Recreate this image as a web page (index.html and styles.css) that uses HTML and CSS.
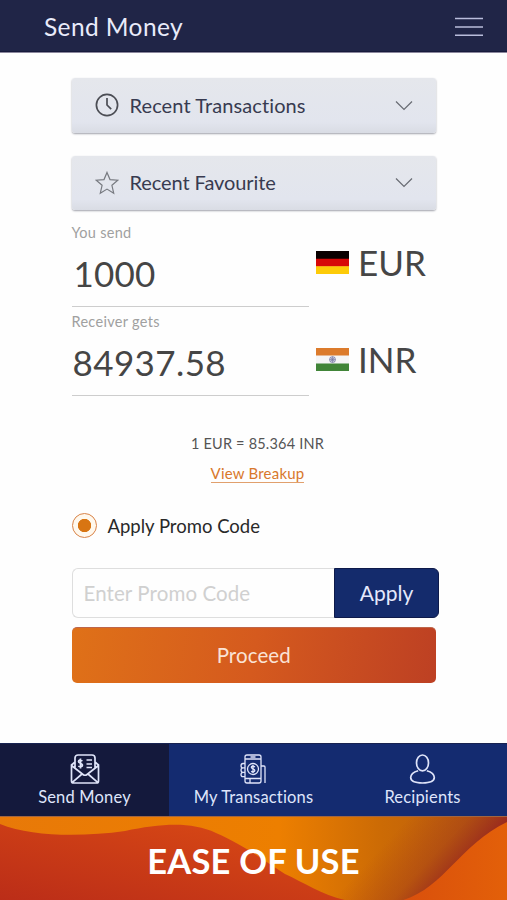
FILE: index.html
```html
<!DOCTYPE html>
<html lang="en">
<head>
<meta charset="utf-8">
<title>Send Money</title>
<link rel="stylesheet" href="styles.css">
</head>
<body>
<header class="topbar">
  <h1 class="title">Send Money</h1>
  <svg class="menu" width="28" height="20" viewBox="0 0 28 20"><path d="M0 1.5h28M0 10h28M0 18.2h28"/></svg>
</header>
<main class="content">
  <section class="card">
    <svg class="clock" width="24" height="24" viewBox="0 0 24 24"><circle cx="12" cy="12" r="10.6"/><path d="M12 5v7l4.2 4.2"/></svg>
    <span class="card-label transactions">Recent Transactions</span>
    <svg class="chevron" width="18" height="11" viewBox="0 0 18 11"><path d="M1 1.5l8 8 8-8"/></svg>
  </section>
  <section class="card">
    <svg class="star" width="24" height="24" viewBox="0 0 24 24"><path d="M12 1.4l3 7.2 7.8.6-5.9 5.1 1.8 7.9-6.7-4.1-6.7 4.1 1.8-7.9-5.9-5.1 7.8-.6z"/></svg>
    <span class="card-label favourite">Recent Favourite</span>
    <svg class="chevron" width="18" height="11" viewBox="0 0 18 11"><path d="M1 1.5l8 8 8-8"/></svg>
  </section>
  <section class="exchange">
    <div class="field">
      <div class="amount-box">
        <label class="field-label">You send</label>
        <div class="amount send-amount">1000</div>
      </div>
      <div class="currency">
        <svg width="33" height="23" viewBox="0 0 33 23"><path fill="#090000" d="M0 0h33v8H0z"/><path fill="#d70808" d="M0 7.7h33v8H0z"/><path fill="#fdcb08" d="M0 15.3h33V23H0z"/></svg>
        <span class="code">EUR</span>
      </div>
    </div>
    <div class="field">
      <div class="amount-box">
        <label class="field-label">Receiver gets</label>
        <div class="amount get-amount">84937.58</div>
      </div>
      <div class="currency get-currency">
        <svg width="33" height="23" viewBox="0 0 33 23"><path fill="#f5f5f6" d="M0 0h33v23H0z"/><path fill="#dc7b2c" d="M0 0h33v7.5H0z"/><path fill="#418538" d="M0 15.5h33V23H0z"/><circle cx="16.5" cy="11.6" r="3" fill="#d4d5e5" stroke="#8587ad" stroke-width=".8"/><path stroke="#7779a4" stroke-width=".7" d="M16.5 8.6v6M13.5 11.6h6M14.4 9.5l4.2 4.2M18.6 9.5l-4.2 4.2"/></svg>
        <span class="code">INR</span>
      </div>
    </div>
  </section>
  <p class="rate"><span>1 EUR = 85.364 INR</span></p>
  <p class="breakup"><a>View Breakup</a></p>
  <div class="promo-toggle"><span class="radio"></span><span class="promo-label">Apply Promo Code</span></div>
  <div class="promo">
    <div class="promo-input"><span>Enter Promo Code</span></div>
    <div class="apply"><span>Apply</span></div>
  </div>
  <div class="proceed"><span>Proceed</span></div>
</main>
<nav class="tabs">
  <div class="tab active">
    <svg width="30" height="30" viewBox="0 0 30 30"><path d="M5 14V4a3 3 0 0 1 3-3h14a3 3 0 0 1 3 3v10M5 8L1.5 11v16q0 2 2 2h23q2 0 2-2V11L25 8M1.5 11.5L13 20.5q2 1.500 4 0L28.500 11.500M2.300 28.300L12 20M27.700 28.300L18 20M16.500 6h5.500M16.500 10h5.500M16.500 13.500h5.500M12.500 6.700q-3.800-1.400-4 .8c0 2 4 1.400 4 3.600 0 2-2.600 2-4.200 1M10.500 4.500v10"/></svg>
    <span>Send Money</span>
  </div>
  <div class="tab">
    <svg class="thin" width="30" height="30" viewBox="0 0 30 30"><path d="M6 25V3a2 2 0 0 1 2-2h12a2 2 0 0 1 2 2v24a2 2 0 0 1-2 2H8a2 2 0 0 1-2-2zM6 5h16M11.500 3h5M6 24.500h16M6 9.500H4q-2 0-2 2.200t2 2.200h2M4 13.900q-2 0-2 2.200t2 2.200h2M4 18.300q-2 0-2 2.200t2 2.200h2M22 12h3q1 0 1 1v16M11 24v5"/><circle cx="14" cy="15" r="5.500"/><path d="M16 12.800q-3.500-1.500-3.700.5c0 2 3.500 1.300 3.500 3.200 0 1.600-2 1.600-3.700.8M14 11v8"/></svg>
    <span>My Transactions</span>
  </div>
  <div class="tab">
    <svg width="30" height="30" viewBox="0 0 30 30"><ellipse cx="14.500" cy="8.900" rx="6" ry="7.900"/><path d="M10.200 16.700C5.500 18 2.700 20.200 2.700 23.600c0 3.400 4.800 5.400 11.800 5.400s11.800-2 11.800-5.400c0-3.400-2.800-5.600-7.500-6.900"/></svg>
    <span>Recipients</span>
  </div>
</nav>
<footer class="banner">
  <svg class="waves" width="507" height="84" viewBox="0 0 507 84">
    <defs>
      <linearGradient id="gold" x1="0" x2="1" y1="0" y2="0"><stop offset="0" stop-color="#e87908"/><stop offset=".55" stop-color="#ed7f00"/><stop offset=".75" stop-color="#cc6b05"/><stop offset="1" stop-color="#b45810"/></linearGradient>
      <linearGradient id="shade" gradientUnits="userSpaceOnUse" x1="398" y1="12" x2="452" y2="62"><stop offset="0" stop-color="#9b2a20" stop-opacity="0"/><stop offset=".6" stop-color="#9b2f1e" stop-opacity=".35"/><stop offset="1" stop-color="#98271f" stop-opacity=".9"/></linearGradient>
      <linearGradient id="red" x1="0" x2="1" y1="1" y2="0"><stop offset="0" stop-color="#bb2d18"/><stop offset=".8" stop-color="#d54615"/><stop offset="1" stop-color="#d65212"/></linearGradient>
      <linearGradient id="orange" gradientUnits="userSpaceOnUse" x1="400" x2="507" y1="0" y2="0"><stop offset="0" stop-color="#d94f0c"/><stop offset="1" stop-color="#e36009"/></linearGradient>
    </defs>
    <path fill="url(#gold)" d="M0 0h507v84H0z"/>
    <path fill="url(#shade)" d="M300 0h207v84H300z"/>
    <path fill="url(#red)" d="M0 7C32 20 82 20 125 14C160 7 190 4 216 16C246 29 266 45 285 57C305 66 325 80 350 84H0z"/>
    <path fill="url(#orange)" d="M400 84C444 72 458 29 507 5v79z"/>
  </svg>
  <strong>EASE OF USE</strong>
</footer>
</body>
</html>
```

FILE: styles.css
```css
* { box-sizing: border-box; }
body { margin: 0; width: 507px; height: 900px; overflow: hidden; display: flex; flex-direction: column; background: #fefefe; font-family: Lato, sans-serif; font-variant-ligatures: none; }
svg { flex: none; fill: none; }
span, strong, a, label { white-space: nowrap; }
.topbar { height: 53px; flex: none; display: flex; align-items: center; justify-content: space-between; padding: 1px 24px 0 44px; background: #202547; border-bottom: 1px solid #8b879d; box-shadow: inset 0 -1px #171a3b; }
.title { margin: 0; font-size: 24.500px; font-weight: 400; color: #e9ebfa; letter-spacing: .4px; }
.menu { stroke: #b9bddc; stroke-width: 1.600; }
.content { height: 690px; flex: none; padding: 25px 68px 0 71.500px; display: flex; flex-direction: column; }
.card { width: 364.500px; height: 54.500px; flex: none; margin-bottom: 23px; display: flex; align-items: center; padding: 0 23.500px; background: linear-gradient(#e5e7ec, #e2e5ee 80%, #d9dce4); border-radius: 3px; box-shadow: 0 1px 2px #a0a2ab; }
.card-label { margin-left: 10.500px; margin-right: auto; padding-bottom: 1px; font-size: 20px; line-height: 24px; color: #383b50; }
.transactions { letter-spacing: .1px; }
.favourite { letter-spacing: -.08px; }
.clock { stroke: #4b4d54; stroke-width: 1.700; }
.star { stroke: #777a80; stroke-width: 1.200; }
.chevron { stroke: #686b73; stroke-width: 1.200; }
.exchange { height: 178px; flex: none; margin-top: -10.500px; }
.field { display: flex; height: 89px; }
.amount-box { width: 237px; height: 84px; border-bottom: 1px solid #cdcdcd; }
.field-label { display: block; height: 21px; font-size: 14.500px; line-height: 19px; color: #a0a0a0; letter-spacing: .3px; }
.amount { font-size: 35px; line-height: 59px; color: #454545; }
.send-amount { padding-left: 2px; letter-spacing: .2px; }
.get-amount { padding-left: 1px; letter-spacing: .4px; }
.currency { display: flex; align-items: center; height: 40px; margin: 19px 0 0 7.500px; }
.currency svg { margin-top: 2px; }
.get-currency { margin-top: 27px; }
.code { margin-left: 9px; font-size: 35px; line-height: 40px; color: #464646; }
.rate { margin: 33px 0 0; width: 372px; height: 20px; text-align: center; font-size: 14.500px; line-height: 20px; color: #555; letter-spacing: .2px; }
.breakup { margin: 11.500px 0 0; width: 372px; height: 20px; text-align: center; font-size: 15px; line-height: 17px; color: #d8782c; letter-spacing: .2px; }
.breakup a { display: inline-block; border-bottom: 1px solid #e1a06d; }
.promo-toggle { display: flex; align-items: center; height: 26px; margin-top: 27px; }
.radio { width: 25px; height: 25px; border: 1.500px solid #d98347; border-radius: 50%; background: radial-gradient(circle, #d87512 0 6.300px, #fff8ed 7px); }
.promo-label { margin-left: 11px; padding-top: 1px; font-size: 18.500px; color: #292929; }
.promo { display: flex; height: 50px; flex: none; margin-top: 30px; }
.promo-input { width: 262.500px; display: flex; align-items: center; border: 1.500px solid #dedede; border-right: 0; border-radius: 6px 0 0 6px; padding: 0 0 1px 11px; font-size: 20.500px; letter-spacing: .1px; color: #d0d0d0; }
.apply { width: 105px; display: flex; align-items: center; justify-content: center; padding-bottom: 1px; background: #142b6c; border: 1px solid #0e1a4a; border-radius: 0 6px 6px 0; color: #e4e9fc; font-size: 21px; }
.proceed { display: flex; align-items: center; justify-content: center; width: 364.500px; height: 56px; flex: none; margin-top: 9px; padding-bottom: 2px; border-radius: 5px; background: linear-gradient(100deg, #df7118, #d55a1e 50%, #bd4023); color: #fae3d6; font-size: 20.500px; letter-spacing: .1px; border-top: 1px solid #bd664b; }
.tabs { display: grid; grid-template-columns: 1fr 1fr 1fr; height: 73px; flex: none; background: #142b70; border-top: 1px solid #182351; }
.tab { display: flex; flex-direction: column; align-items: center; padding-top: 10px; color: #dfe5fb; font-size: 16.500px; line-height: 20px; letter-spacing: .18px; gap: 3px; }
.tab svg { stroke: #dfe4f9; stroke-width: 1.700; }
.tab .thin { stroke-width: 1.300; }
.active { background: #14193c; }
.banner { height: 84px; flex: none; display: grid; border-top: 1px solid #a16540; overflow: hidden; }
.waves, .banner strong { grid-area: 1 / 1; }
.banner strong { z-index: 1; place-self: center; font-size: 34.500px; line-height: 40px; letter-spacing: .2px; color: #fff; padding-top: 3px; }
```
